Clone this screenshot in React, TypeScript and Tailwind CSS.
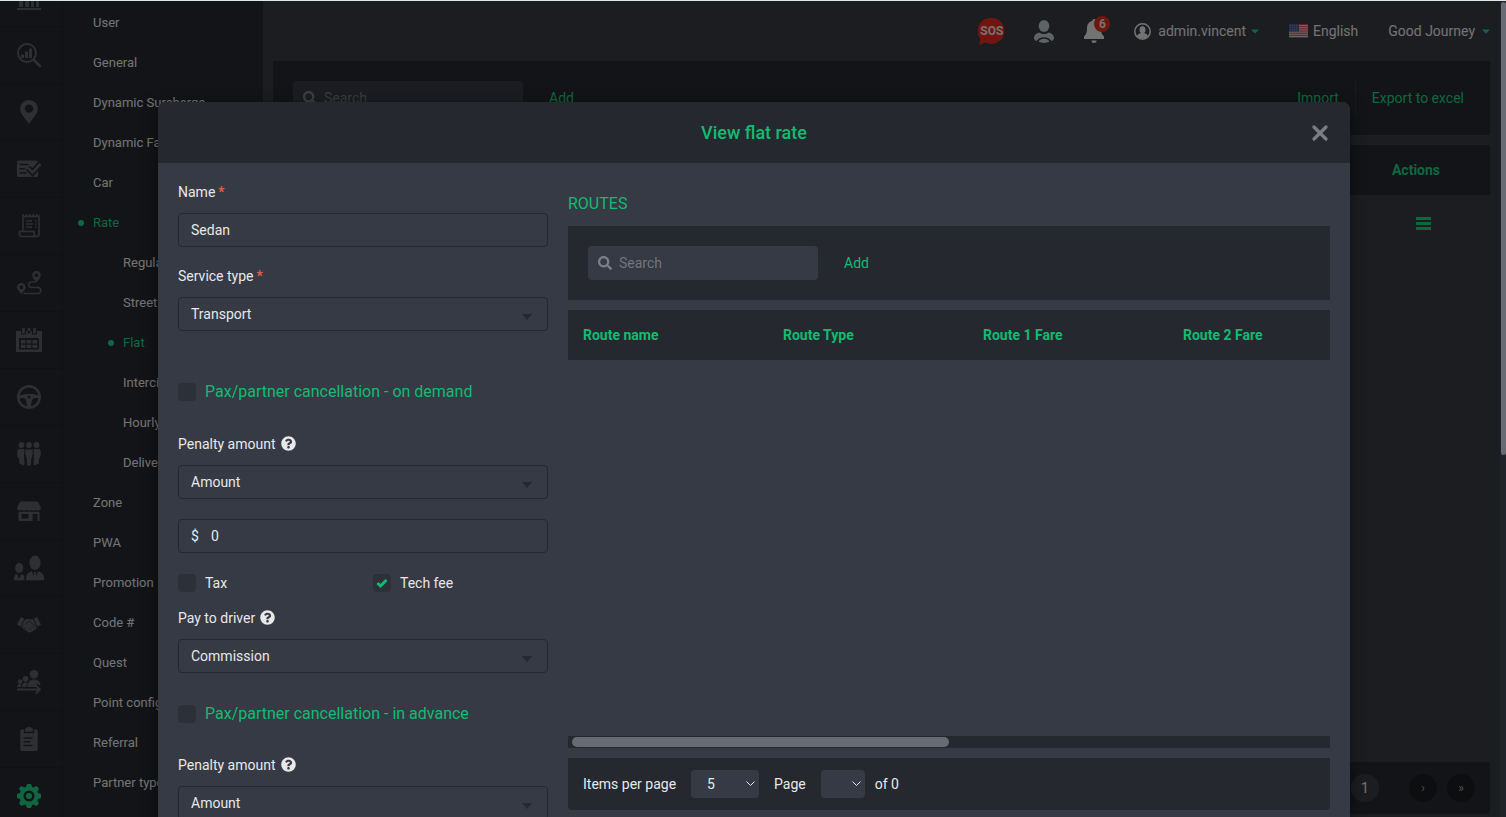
import { type ReactNode } from "react";
import { FaCaretDown, FaQuestionCircle, FaSearch } from "react-icons/fa";

const S = { fill: "none", stroke: "currentColor" };

const RAIL_ICONS: ReactNode[] = [
  <g>
    <path d="M0 22h24v2H0zM2 12h4v9H2zM8 5h4v16H8zM14 9h3v12h-3zM19 2h3v19h-3z" fill="currentColor" />
  </g>,
  <g>
    <circle cx="10" cy="10" r="9" {...S} strokeWidth="2" />
    <path d="M16.500 16.500 23 23" {...S} strokeWidth="2.500" strokeLinecap="round" />
    <path d="M4 11.500h3V15H4zM8 8.500h3V15H8zM12 5.500h3V15h-3z" fill="currentColor" />
  </g>,
  <path
    fill="currentColor"
    fillRule="evenodd"
    d="M12 0C7 0 3.200 3.800 3.200 8.600 3.200 14 8 18 12 24c4-6 8.800-10 8.800-15.400C20.800 3.800 17 0 12 0Zm0 4.400a4.200 4.200 0 1 1 0 8.400 4.200 4.200 0 0 1 0-8.400Z"
  />,
  <g>
    <path d="M1.500 3.500h18A1.500 1.500 0 0 1 21 5v13.500a1.500 1.500 0 0 1-1.500 1.500h-18A1.500 1.500 0 0 1 0 18.500V5a1.500 1.500 0 0 1 1.500-1.500Z" fill="currentColor" />
    <path d="M3 7.500h8M3 11.800h4.500M3 16h6" {...S} stroke="#25282f" strokeWidth="1.500" strokeLinecap="round" />
    <path d="m11 11 4.500 4.500L23 7" {...S} stroke="#25282f" strokeWidth="6" />
    <path d="m11 11 4.500 4.500L23.500 7" {...S} strokeWidth="2.600" />
  </g>,
  <g {...S} strokeWidth="1.600">
    <path d="M6 17V2.500h16V20a2.500 2.500 0 0 1-5 0v-2.500H2.500V20A2.500 2.500 0 0 0 5 22.500h14.500" />
    <path d="M5 1.300h18" strokeDasharray="2 1.500" strokeWidth="2" />
    <path d="M9 7h6M9 10h7M9 13h6M18 7h1.500M18 10h1.500M18 13h1.500" strokeWidth="1.400" />
  </g>,
  <g>
    <path fill="currentColor" fillRule="evenodd" d="M19.500 0A4.300 4.300 0 0 0 15.200 4.300C15.200 7 17.700 8.500 19.500 11.500 21.300 8.500 23.800 7 23.800 4.300A4.300 4.300 0 0 0 19.500 0Zm0 2.300a2 2 0 1 1 0 4 2 2 0 0 1 0-4ZM4.300 12A4.300 4.300 0 0 0 0 16.300C0 19 2.500 20 4.300 23.500 6.100 20 8.600 19 8.600 16.300A4.300 4.300 0 0 0 4.300 12Zm0 2.300a2 2 0 1 1 0 4 2 2 0 0 1 0-4Z" />
    <path d="M18 11h-3.500a2.800 2.800 0 0 0 0 5.600h6.300a2.900 2.900 0 0 1 0 5.900H7" {...S} strokeWidth="1.500" strokeLinecap="round" />
  </g>,
  <path
    fill="currentColor"
    fillRule="evenodd"
    d="M-1 3H4v3.500h5V3h6v3.500h5V3h5v21H-1ZM5.200 0h2.600v5.500H5.200ZM16.200 0h2.600v5.500h-2.600ZM10.700 0h2.600v5.500h-2.600ZM2 10v11.500h20V10ZM3.800 12h4.700v3.500H3.800Zm5.900 0h4.600v3.500H9.700Zm5.800 0h4.700v3.500h-4.700ZM3.800 16.800h4.700V20H3.800Zm5.900 0h4.600V20H9.700Zm5.800 0h4.700V20h-4.700Z"
  />,
  <g>
    <circle cx="12" cy="12" r="10.700" {...S} strokeWidth="2.600" />
    <path fill="currentColor" fillRule="evenodd" d="M2 10.500 8.500 9h7l6.500 1.500v2.500h-4.200c-2.500.5-3.600 3-3.800 9h-4c-.2-6-1.300-8.500-3.800-9H2ZM12 10.800a1.400 1.400 0 1 0 0 2.800 1.400 1.400 0 0 0 0-2.800Z" />
  </g>,
  <g fill="currentColor">
    <circle cx="4.500" cy="3" r="2.900" />
    <circle cx="19.500" cy="3" r="2.900" />
    <circle cx="12" cy="3" r="2.900" />
    <path d="M2.500 7h4c1 0 1.200.6 1.200 1.500L7 15l.5 6.500a1.300 1.300 0 0 1-2.600.7L2.500 22 1.800 16C.3 15.500 0 12 .3 9.500.5 7.800 1 7 2.500 7ZM21.500 7h-4c-1 0-1.200.6-1.200 1.500L17 15l-.5 6.500a1.300 1.300 0 0 0 2.600.7l2.400-.2.700-6c1.500-.5 1.800-4 1.500-6.500C23.500 7.800 23 7 21.500 7Z" />
    <path d="M9.800 7h4.400c1.400 0 2 .8 2 2.400 0 2.200-.3 4.600-1.500 6.600l-.5 7.300c0 .5-.5.700-.9.700h-2.600c-.4 0-.9-.2-.9-.7L9.300 16c-1.200-2-1.500-4.400-1.500-6.600 0-1.600.6-2.400 2-2.400Z" stroke="#25282f" strokeWidth=".8" />
  </g>,
  <g fill="currentColor">
    <path d="M4.500 2.500h15c.8 0 1.300.3 1.700 1L24 8.500c0 1.800-1.200 3-2.500 3s-2.300-.8-2.300-.8-1 .8-2.400.8-2.400-.8-2.400-.8-1 .8-2.400.8-2.400-.8-2.400-.8-1 .8-2.400.8-2.400-.8-2.400-.8-1 .8-2.300.8C1.200 11.500 0 10.300 0 8.500l2.800-5c.4-.7.900-1 1.700-1Z" />
    <path fillRule="evenodd" d="M1.500 12.800h21V22h-2v-7h-5v7h-14Zm3 2.200v4.500h7V15Z" />
  </g>,
  <g fill="currentColor">
    <ellipse cx="18" cy="6.800" rx="5.600" ry="7.300" />
    <ellipse cx="2.200" cy="12" rx="4" ry="5" />
    <path d="M9 24.300c.2-5.300 1-7.500 6-9l2.500 7.500h1l2.500-7.500c5 1.500 6 3.700 6.200 9ZM-3 24.300c0-3.800.5-5.500 3-6.300L1.600 22h1.200L4.500 18c1.500.5 2.500 1.300 2.800 2.300v4Z" />
    <path d="M17 16h2l.6 6.500-1.600 2-1.600-2Z" />
  </g>,
  <g fill="currentColor">
    <path d="m4 4 3.300 1.700-3.800 8L0 11.500ZM20 4l-3.300 1.700 3.800 8 3.500-2.200Z" />
    <path d="M8 6.500 11 5.800l1.500.5L15.800 6l4 8.200-1 1.800c-.3.800-1 1-1.600.8-.2.900-.9 1.400-1.800 1.300-.3.800-1.200 1.100-2 .8-.5.700-1.300.8-2 .3L9.500 18 6 15.500l-1.800-1.400Z" />
    <path d="m8.500 11 4-3 6 5.500M5.500 14.500l1.300-1.400M7.300 16l1.500-1.700M9.300 17.500l1.400-1.600M12 14.500l2.500 2.500M14 12.800l2.700 2.400" {...S} stroke="#25282f" strokeWidth=".8" />
  </g>,
  <g>
    <g fill="currentColor">
      <circle cx="17" cy="4.300" r="4.200" />
      <circle cx="8.500" cy="8.800" r="2.900" />
      <circle cx="3" cy="11.500" r="2.200" />
      <path d="M10.500 17c0-5 2.500-7.500 6.500-7.500 4.500 0 6.500 2.500 6.500 6L20 13.500V17ZM5 17c0-3 1.200-4.500 3.500-4.500 1 0 1.700.4 2 1-.7 1.200-1 2.200-1 3.500ZM0 17c0-2 1-3 3-3 .5 0 1 .1 1.300.3-.4.800-.5 1.700-.5 2.700Z" />
    </g>
    <path d="M0 19.500h22M19 15.500l4 4-4 4" {...S} strokeWidth="1.800" />
  </g>,
  <g>
    <path d="M5 2.500h3C8.500 1 10 0 12 0s3.500 1 4 2.500h3c1 0 1.700.7 1.700 1.700v18c0 1-.7 1.800-1.700 1.800H5c-1 0-1.700-.8-1.700-1.800v-18c0-1 .7-1.700 1.700-1.700Z" fill="currentColor" />
    <path d="M7.500 2.500v3h9v-3M6.500 11h9M6.500 14.800h7M6.500 18.500h9" {...S} stroke="#25282f" strokeWidth="1.400" />
  </g>,
  <path
    fill="currentColor"
    fillRule="evenodd"
    d="M10 0h4l1 3 1.500.6L19.500 2 22 4.500l-1.500 3L21 9l3 1v4l-3 1-.6 1.500L22 19.500 19.500 22l-3-1.500L15 21l-1 3h-4l-1-3-1.500-.6L4.500 22 2 19.500l1.500-3L3 15l-3-1v-4l3-1 .6-1.500L2 4.500 4.500 2l3 1.500L9 3Zm2 6.500a5.500 5.500 0 1 0 0 11 5.500 5.500 0 0 0 0-11Zm0 2.500a3 3 0 1 1 0 6 3 3 0 0 1 0-6Z"
  />,
];

interface MenuItem {
  label: string;
  nested?: boolean;
  active?: boolean;
}

const MENU: MenuItem[] = [
  { label: "User" },
  { label: "General" },
  { label: "Dynamic Surcharge" },
  { label: "Dynamic Fare" },
  { label: "Car" },
  { label: "Rate", active: true },
  { label: "Regular", nested: true },
  { label: "Street sharing", nested: true },
  { label: "Flat", nested: true, active: true },
  { label: "Intercity", nested: true },
  { label: "Hourly", nested: true },
  { label: "Delivery", nested: true },
  { label: "Zone" },
  { label: "PWA" },
  { label: "Promotion" },
  { label: "Code #" },
  { label: "Quest" },
  { label: "Point config" },
  { label: "Referral" },
  { label: "Partner type" },
];

const ROUTE_COLUMNS = ["Route name", "Route Type", "Route 1 Fare", "Route 2 Fare"];

function Rail() {
  return (
    <nav className="w-[63px] shrink-0 overflow-hidden border-r border-[#202329]">
      <div className="-mt-[31px]">
        {RAIL_ICONS.map((icon, i) => {
          const active = i === RAIL_ICONS.length - 1;
          return (
            <a
              key={i}
              href="#"
              aria-label={`Section ${i + 1}`}
              className={`flex h-[57px] items-center border-b border-[#202329] pl-[17px] ${
                active ? "text-[#1ccf80]" : "text-[#5d5f65]"
              }`}
            >
              <svg width="24" height="24" viewBox="0 0 24 24" className="overflow-visible">
                {icon}
              </svg>
            </a>
          );
        })}
      </div>
    </nav>
  );
}

function SubMenu() {
  return (
    <nav className="w-[200px] shrink-0 overflow-hidden pt-0.5 text-[13px]">
      {MENU.map((item) => (
        <a
          key={item.label}
          href="#"
          className={`flex h-10 items-center gap-[9px] whitespace-nowrap ${item.nested ? "pl-[45px]" : "pl-[15px]"} ${
            item.active ? "text-[#1ccf80]" : "text-[#e6e6e6]"
          }`}
        >
          <span className={`size-1.5 rounded-full ${item.active ? "bg-[#1ccf80]" : ""}`} />
          {item.label}
        </a>
      ))}
    </nav>
  );
}

function SearchBox({ id }: { id: string }) {
  return (
    <label htmlFor={id} className="flex h-[34px] w-[230px] items-center gap-[7px] rounded bg-[#363a45] px-2.5 text-[#7d7f86]">
      <FaSearch size={14} />
      <input
        id={id}
        type="text"
        aria-label="Search"
        placeholder="Search"
        className="min-w-0 flex-1 bg-transparent outline-none placeholder:text-[#73757d]"
      />
    </label>
  );
}

function Flag() {
  return (
    <svg width="19" height="14" viewBox="0 0 19 14">
      <rect width="19" height="14" fill="#d9d0d0" />
      {[0, 2, 4, 6, 8, 10, 12].map((y) => (
        <rect key={y} y={y * 1.08} width="19" height="1.08" fill="#cf4450" />
      ))}
      <rect width="10" height="7.500" fill="#4b5796" />
      <path d="M1 1.500h8M1 3.700h8M1 6h8" stroke="#9299c4" strokeWidth=".8" strokeDasharray="1 1" />
    </svg>
  );
}

function TopBar() {
  return (
    <header className="flex h-[60px] items-center justify-end text-[#e6e6e6]">
      <button aria-label="SOS" className="relative mr-[29px] flex size-[27px] items-center justify-center">
        <svg width="27" height="27" viewBox="0 0 27 27" className="absolute inset-0">
          <path d="M13.500 0a13 13 0 1 1-6 24.600L1 27l1.500-6A13 13 0 0 1 13.500 0Z" fill="#e8291c" />
        </svg>
        <span className="relative font-['Liberation_Sans_Narrow',Roboto,sans-serif] text-xs font-bold">SOS</span>
      </button>
      <button aria-label="Drivers" className="mr-[30px]">
        <svg width="20" height="23" viewBox="0 0 20 23" fill="#bcc6ca">
          <ellipse cx="10" cy="6" rx="5.300" ry="6" />
          <path d="M0 18c0-3 2-4.600 5.500-5.500 1.300 1 2.800 1.500 4.500 1.500s3.200-.5 4.500-1.500C18 13.400 20 15 20 18c0 1.500-1 2.300-2.500 3-1.500-2.500-4-3.800-7.500-3.800S4 18.500 2.500 21C1 20.300 0 19.500 0 18Z" />
          <path d="M4.500 21.800c1-2 3-3 5.500-3s4.500 1 5.500 3c-3.500 1.500-7.500 1.500-11 0Z" />
        </svg>
      </button>
      <button aria-label="Notifications" className="relative mr-[30px] flex">
        <svg width="20" height="24" viewBox="0 0 20 24" fill="#e6e6e6">
          <path d="M10 0a1.500 1.500 0 0 1 1.500 1.800c3.500.8 5.500 3.400 5.500 7 0 5.200 1 7 3 8.700V20H0v-2.500c2-1.700 3-3.500 3-8.700 0-3.600 2-6.200 5.500-7A1.500 1.500 0 0 1 10 0ZM7.500 21.500h5a2.500 2.500 0 0 1-5 0Z" />
        </svg>
        <span className="absolute -top-[3px] left-[10px] flex size-4 items-center justify-center rounded-full bg-[#d9301f] text-xs font-bold">
          6
        </span>
      </button>
      <button className="mr-[28px] flex items-center gap-[7px]">
        <svg width="17" height="17" viewBox="0 0 17 17">
          <circle cx="8.500" cy="8.500" r="7.700" fill="none" stroke="#e6e6e6" strokeWidth="1.500" />
          <ellipse cx="8.500" cy="6.700" rx="3" ry="3.500" fill="#e6e6e6" />
          <path d="M3 13.300c.5-2 2-2.800 4-3.300h3c2 .5 3.500 1.300 4 3.300a7.300 7.300 0 0 1-11 0Z" fill="#e6e6e6" />
        </svg>
        <span>admin.vincent</span>
        <FaCaretDown size={12} className="-ml-1 text-[#1ccf80]" />
      </button>
      <button className="mr-[30px] flex items-center gap-[5px]">
        <Flag />
        English
      </button>
      <button className="flex items-center gap-[5px]">
        Good Journey
        <FaCaretDown size={12} className="-mr-0.5 text-[#1ccf80]" />
      </button>
    </header>
  );
}

function Page() {
  return (
    <div className="flex min-w-0 flex-1 flex-col bg-[#383b43] pl-2.5 pr-4 pb-[3px]">
      <TopBar />
      <div className="mb-2.5 flex items-center bg-[#25282f] p-5 text-[#1ccf80]">
        <SearchBox id="rate-search" />
        <button className="ml-[26px]">Add</button>
        <div className="ml-auto flex h-[34px] items-center">
          <button className="h-full border-r border-[#33363d] pr-4">Import</button>
          <button className="pl-4 pr-1.5">Export to excel</button>
        </div>
      </div>
      <table className="w-full">
        <thead>
          <tr className="h-[50px] bg-[#25282f]">
            <th />
            <th className="w-[148px] font-bold text-[#1ccf80]">Actions</th>
          </tr>
        </thead>
        <tbody>
          <tr className="h-[54px]">
            <td />
            <td className="pl-3.5 text-center">
              <button aria-label="Row actions" className="align-middle">
                <svg width="15" height="13" viewBox="0 0 15 13" fill="#1ccf80">
                  <path d="M0 0h15v3H0zM0 5h15v3H0zM0 10h15v3H0z" />
                </svg>
              </button>
            </td>
          </tr>
        </tbody>
      </table>
      <div className="mt-auto flex h-[52px] items-center justify-end gap-2.5 rounded-b bg-[#25282f] pr-[15px] text-[#e6e6e6]">
        <button className="mr-5 size-7 rounded-full bg-[#383b43]">1</button>
        <button className="size-7 rounded-full bg-[#1b1d20] text-xs text-[#a0a0a0]">›</button>
        <button className="size-7 rounded-full bg-[#1b1d20] text-xs text-[#a0a0a0]">»</button>
      </div>
    </div>
  );
}

interface FieldProps {
  id: string;
  label: string;
  required?: boolean;
  help?: boolean;
  children: ReactNode;
}

function Field({ id, label, required, help, children }: FieldProps) {
  return (
    <div>
      <label htmlFor={id} className="mb-3 flex h-[18px] items-center">
        {label}
        {required && <span className="ml-[3px] font-medium text-[#e8604c]">*</span>}
        {help && <FaQuestionCircle size={15} className="mb-0.5 ml-[5px]" />}
      </label>
      {children}
    </div>
  );
}

function Select({ id, value }: { id: string; value: string }) {
  return (
    <div className="relative">
      <select
        id={id}
        className="h-[34px] w-full appearance-none rounded border border-[#25282f] bg-transparent px-3 outline-none"
      >
        <option>{value}</option>
      </select>
      <svg width="10" height="6" viewBox="0 0 10 6" className="pointer-events-none absolute right-4 top-[17px]">
        <path d="M0 0h10L5 6Z" fill="#25282f" />
      </svg>
    </div>
  );
}

function CheckBox({ label, checked = false, title = false }: { label: string; checked?: boolean; title?: boolean }) {
  return (
    <label className={`flex h-5 flex-1 items-center gap-[9px] ${title ? "text-base text-[#10bc72]" : ""}`}>
      <span className="relative flex size-[18px] items-center justify-center">
        <input type="checkbox" defaultChecked={checked} className="peer absolute inset-0 appearance-none rounded-sm bg-[#2d3039]" />
        <svg width="12" height="10" viewBox="0 0 12 10" className="relative hidden peer-checked:block">
          <path d="m1.500 5 3 3L10.500 2" fill="none" stroke="#10bc72" strokeWidth="2.800" />
        </svg>
      </span>
      {label}
    </label>
  );
}

function RateForm() {
  return (
    <form className="flex w-[370px] shrink-0 flex-col">
      <Field id="name" label="Name" required>
        <input
          id="name"
          type="text"
          defaultValue="Sedan"
          className="h-[34px] w-full rounded border border-[#25282f] bg-transparent px-3 outline-none"
        />
      </Field>
      <div className="mt-5">
        <Field id="service-type" label="Service type" required>
          <Select id="service-type" value="Transport" />
        </Field>
      </div>

      {/* On demand */}
      <div className="mb-[33px] mt-[51px] flex">
        <CheckBox title label="Pax/partner cancellation - on demand" />
      </div>
      <Field id="penalty-demand" label="Penalty amount" help>
        <Select id="penalty-demand" value="Amount" />
      </Field>
      <label className="mt-5 flex h-[34px] items-center gap-3 rounded border border-[#25282f] px-3">
        $
        <input
          type="text"
          aria-label="Penalty value"
          defaultValue="0"
          className="min-w-0 flex-1 bg-transparent outline-none"
        />
      </label>
      <div className="mb-4 mt-5 flex gap-5">
        <CheckBox label="Tax" />
        <CheckBox label="Tech fee" checked />
      </div>
      <Field id="pay-driver" label="Pay to driver" help>
        <Select id="pay-driver" value="Commission" />
      </Field>

      {/* In advance */}
      <div className="mb-8 mt-[31px] flex">
        <CheckBox title label="Pax/partner cancellation - in advance" />
      </div>
      <Field id="penalty-advance" label="Penalty amount" help>
        <Select id="penalty-advance" value="Amount" />
      </Field>
    </form>
  );
}

function PageSelect({ label, value, className }: { label: string; value: string; className: string }) {
  return (
    <div className={`relative ${className}`}>
      <select aria-label={label} className="h-7 w-full appearance-none rounded bg-[#363a45] px-4 outline-none">
        <option>{value}</option>
      </select>
      <svg width="9" height="6" viewBox="0 0 9 6" className="pointer-events-none absolute right-1 top-[11px]">
        <path d="m.5.5 4 4 4-4" fill="none" stroke="#e6e6e6" strokeWidth="1" />
      </svg>
    </div>
  );
}

function Routes() {
  return (
    <section className="min-w-0 flex-1">
      <h3 className="mb-2.5 mt-[9px] text-base text-[#10bc72]">ROUTES</h3>
      <div className="mb-2.5 flex items-center bg-[#25282f] p-5">
        <SearchBox id="route-search" />
        <button className="ml-[26px] text-[#10bc72]">Add</button>
      </div>
      <div className="h-[426px] overflow-hidden">
        <table className="w-[800px] table-fixed">
          <thead>
            <tr className="h-[50px] bg-[#25282f] text-left text-[#10bc72]">
              {ROUTE_COLUMNS.map((col) => (
                <th key={col} className="w-[200px] px-[15px] font-bold">
                  {col}
                </th>
              ))}
            </tr>
          </thead>
        </table>
      </div>
      <div className="mb-2.5 bg-[#25282f] px-1 py-px">
        <div className="h-2.5 w-1/2 rounded-full bg-[#686b73]" />
      </div>
      <div className="flex h-[52px] items-center rounded-b bg-[#25282f] px-[15px]">
        Items per page
        <PageSelect label="Items per page" value="5" className="ml-[15px] mr-[15px] w-[68px]" />
        Page
        <PageSelect label="Page" value="" className="ml-[15px] mr-2.5 w-11" />
        of 0
      </div>
    </section>
  );
}

export default function App() {
  return (
    <div className="relative flex h-screen flex-col overflow-hidden bg-[#25282f] font-[Roboto,sans-serif] text-sm">
      <div className="flex min-h-0 flex-1 pt-px">
        <Rail />
        <SubMenu />
        <Page />
      </div>

      <div className="absolute inset-0 overflow-hidden bg-black/50">
        <div
          role="dialog"
          aria-labelledby="dialog-title"
          className="ml-[158px] mr-[156px] mt-[102px] rounded-lg bg-[#363a45] text-[#e8e8e8] shadow-[0_4px_16px_rgba(0,0,0,0.5)]"
        >
          <div className="relative flex h-[61px] items-center justify-center rounded-t-lg bg-[#25282f]">
            <h2 id="dialog-title" className="text-lg font-medium text-[#10bc72]">
              View flat rate
            </h2>
            <button aria-label="Close" className="absolute right-[22px]">
              <svg width="16" height="16" viewBox="0 0 16 16" fill="none" stroke="#7b7e86" strokeWidth="3.200" strokeLinecap="round">
                <path d="m2 2 12 12M14 2 2 14" />
              </svg>
            </button>
          </div>
          <div className="flex gap-5 p-5">
            <RateForm />
            <Routes />
          </div>
        </div>
        <div className="absolute inset-y-0 right-0 w-1.5 bg-[#20232a] pl-px pt-0.5">
          <div className="h-[453px] rounded-full bg-[#686b73]" />
        </div>
      </div>
      <div className="absolute inset-x-0 top-0 h-px bg-[#dde9df]" />
    </div>
  );
}
